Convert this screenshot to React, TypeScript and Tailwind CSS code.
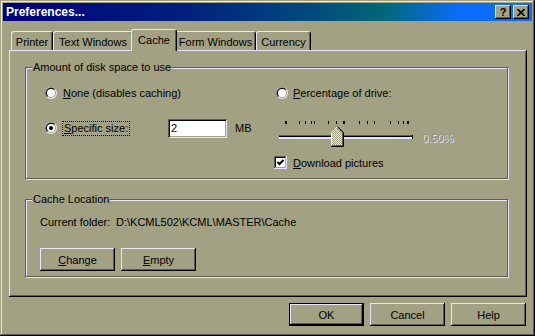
import type { ReactNode } from 'react';

// Win9x style 3D edges, tinted for the olive colour scheme.
const RAISED = 'shadow-[inset_-1px_-1px_#000,inset_1px_1px_#e6e6ff,inset_-2px_-2px_#5e5d48]';
const SUNKEN = 'shadow-[inset_1px_1px_#5e5d48,inset_-1px_-1px_#e6e6ff,inset_2px_2px_#000,inset_-2px_-2px_#a2a184]';

const TICKS = [6, 20, 26, 32, 35, 49, 57, 64, 65, 80, 88, 95, 111, 119, 124, 128, 129];

const TABS = [
  { label: 'Printer', w: 'w-[42px]' },
  { label: 'Text Windows', w: 'w-[80px]' },
  { label: 'Cache', w: 'w-[42px]', active: true },
  { label: 'Form Windows', w: 'w-[81px]' },
  { label: 'Currency', w: 'w-[55px]' },
];

function Radio({ checked }: { checked?: boolean }) {
  return (
    <svg width="12" height="12" viewBox="0 0 12 12" className="shrink-0">
      <circle cx="6" cy="6" r="6" fill="#e6e6ff" />
      <path d="M1.76 10.24 A6 6 0 0 1 10.24 1.76 Z" fill="#5e5d48" />
      <circle cx="6" cy="6" r="5" fill="#a2a184" />
      <path d="M2.46 9.54 A5 5 0 0 1 9.54 2.46 Z" fill="#000" />
      <circle cx="6" cy="6" r="4" fill="#fff" />
      {checked && <circle cx="6" cy="6" r="2" fill="#000" />}
    </svg>
  );
}

function Check() {
  return (
    <svg width="13" height="13" viewBox="0 0 13 13" className="shrink-0">
      <rect x="0" y="0" width="13" height="13" fill="#e6e6ff" />
      <rect x="0" y="0" width="12" height="12" fill="#5e5d48" />
      <rect x="1" y="1" width="11" height="11" fill="#a2a184" />
      <rect x="1" y="1" width="10" height="10" fill="#000" />
      <rect x="2" y="2" width="9" height="9" fill="#fff" />
      <path d="M3.5 6 L5.5 8 L9.5 4" stroke="#000" strokeWidth="2" fill="none" />
    </svg>
  );
}

function Slider() {
  return (
    <svg width="136" height="28" viewBox="0 0 136 28" className="shrink-0">
      <defs>
        <pattern id="dither" width="2" height="2" patternUnits="userSpaceOnUse">
          <rect width="2" height="2" fill="#a2a184" />
          <rect width="1" height="1" fill="#e6e6ff" />
          <rect x="1" y="1" width="1" height="1" fill="#e6e6ff" />
        </pattern>
      </defs>
      {TICKS.map((x, i) => (
        <rect key={x} x={x} y={1} width={i === 0 ? 2 : 1} height={3} fill="#000" />
      ))}
      <rect x="0" y="15" width="134" height="1" fill="#5e5d48" />
      <rect x="0" y="16" width="134" height="1" fill="#000" />
      <rect x="0" y="17" width="134" height="2" fill="#e6e6ff" />
      <rect x="133" y="15" width="1" height="4" fill="#000" />
      <polygon points="53,12 58,7 63,12 63,25 53,25" fill="url(#dither)" />
      <polyline points="52.5,26 52.5,12.5 58.5,6.5" stroke="#e6e6ff" fill="none" />
      <polyline points="58.5,6.5 64.5,12.5 64.5,26.5 52,26.5" stroke="#000" fill="none" />
      <polyline points="58.5,8 63.5,13 63.5,25.5 53,25.5" stroke="#5e5d48" fill="none" />
    </svg>
  );
}

function Btn({ children, def, className = '' }: { children: ReactNode; def?: boolean; className?: string }) {
  return (
    <div
      className={`flex h-[23px] w-[75px] items-center justify-center ${
        def ? 'border border-black' : ''
      } ${className}`}
    >
      <div className={`flex h-full w-full items-center justify-center ${RAISED}`}>{children}</div>
    </div>
  );
}

function Group({ label, className, children }: { label: string; className: string; children: ReactNode }) {
  return (
    <div className={`relative border border-[#5e5d48] shadow-[inset_1px_1px_#e6e6ff,1px_1px_#e6e6ff] ${className}`}>
      <span className="absolute -top-[8px] left-[6px] bg-[#a2a184] px-[1px] leading-[14px]">{label}</span>
      {children}
    </div>
  );
}

export default function App() {
  return (
    <div className="flex h-[336px] w-[535px] select-none flex-col bg-[#a2a184] p-[3px] font-['Liberation_Sans',Arial,sans-serif] text-[11px] leading-[14px] text-black shadow-[inset_-1px_-1px_#000,inset_1px_1px_#a2a184,inset_-2px_-2px_#5e5d48,inset_2px_2px_#e6e6ff]">
      {/* Title bar */}
      <div className="flex h-[18px] shrink-0 items-center bg-[linear-gradient(to_right,#00007a,#00207e_35%,#004a7e_58%,#006878_72%,#0a6cf8_86%,#0a6cf8)] pl-[3px] pr-[3px]">
        <span className="text-[12px] font-bold text-white">Preferences...</span>
        <div className="ml-auto flex gap-[2px]">
          <div className={`flex h-[14px] w-[16px] items-center justify-center bg-[#a2a184] text-[11px] font-bold leading-none ${RAISED}`}>
            ?
          </div>
          <div className={`flex h-[14px] w-[16px] items-center justify-center bg-[#a2a184] ${RAISED}`}>
            <svg width="8" height="7" viewBox="0 0 8 7">
              <path d="M0.5 0 L7.5 7 M7.5 0 L0.5 7" stroke="#000" strokeWidth="1.6" />
            </svg>
          </div>
        </div>
      </div>

      {/* Tabs */}
      <div className="ml-[8px] mt-[8px] flex h-[21px] shrink-0 items-end">
        {TABS.map((t) =>
          t.active ? (
            <div
              key={t.label}
              className="relative z-10 -mx-[2px] -mb-px flex h-[22px] w-[46px] justify-center rounded-t-[3px] border-l border-r border-t border-l-[#e6e6ff] border-r-black border-t-[#e6e6ff] bg-[#a2a184] pt-[3px] shadow-[inset_-1px_0_#5e5d48]"
            >
              {t.label}
            </div>
          ) : (
            <div
              key={t.label}
              className={`flex h-[19px] ${t.w} justify-center rounded-t-[3px] border-l border-r border-t border-l-[#e6e6ff] border-r-black border-t-[#e6e6ff] pt-[3px] shadow-[inset_-1px_0_#5e5d48]`}
            >
              {t.label}
            </div>
          )
        )}
      </div>

      {/* Tab panel */}
      <div className="ml-[6px] mr-[5px] h-[247px] shrink-0 pl-[16px] pt-[17px] shadow-[inset_-1px_-1px_#000,inset_1px_1px_#e6e6ff,inset_-2px_-2px_#5e5d48]">
        <Group label="Amount of disk space to use" className="flex h-[112px] w-[483px] pl-[19px] pt-[18px]">
          <div className="flex w-[229px] flex-col">
            <div className="flex h-[14px] items-center gap-[6px]">
              <Radio />
              <span>
                <u>N</u>one (disables caching)
              </span>
            </div>
            <div className="mt-[18px] flex h-[20px] items-center">
              <div className="flex w-[123px] items-center gap-[5px]">
                <Radio checked />
                <span className="border border-dotted border-black px-[1px] leading-[13px]">
                  <u>S</u>pecific size:
                </span>
              </div>
              <div className={`flex h-[19px] w-[59px] items-center bg-white pl-[3px] ${SUNKEN}`}>2</div>
              <span className="ml-[8px]">MB</span>
            </div>
          </div>
          <div className="flex flex-col">
            <div className="ml-[2px] flex h-[14px] items-center gap-[5px]">
              <Radio />
              <span>
                <u>P</u>ercentage of drive:
              </span>
            </div>
            <div className="ml-[5px] mt-[20px] flex items-start">
              <Slider />
              <span className="ml-[7px] mt-[11px] text-[#8e8d74] [text-shadow:1px_1px_0_#e6e6ff]">0.50%</span>
            </div>
            <div className="mt-[8px] flex h-[13px] items-center gap-[6px]">
              <Check />
              <span>
                <u>D</u>ownload pictures
              </span>
            </div>
          </div>
        </Group>

        <Group label="Cache Location" className="mt-[20px] flex h-[78px] w-[483px] flex-col pl-[14px] pt-[15px]">
          <div className="flex h-[14px] items-center">
            <span className="w-[76px] shrink-0">Current folder:</span>
            <span>D:\KCML502\KCML\MASTER\Cache</span>
          </div>
          <div className="mt-[19px] flex gap-[6px]">
            <Btn>
              <span>
                <u>C</u>hange
              </span>
            </Btn>
            <Btn>
              <span>
                <u>E</u>mpty
              </span>
            </Btn>
          </div>
        </Group>
      </div>

      {/* Dialog buttons */}
      <div className="mr-[6px] mt-[6px] flex justify-end gap-[6px]">
        <Btn def>OK</Btn>
        <Btn>Cancel</Btn>
        <Btn>Help</Btn>
      </div>
    </div>
  );
}
